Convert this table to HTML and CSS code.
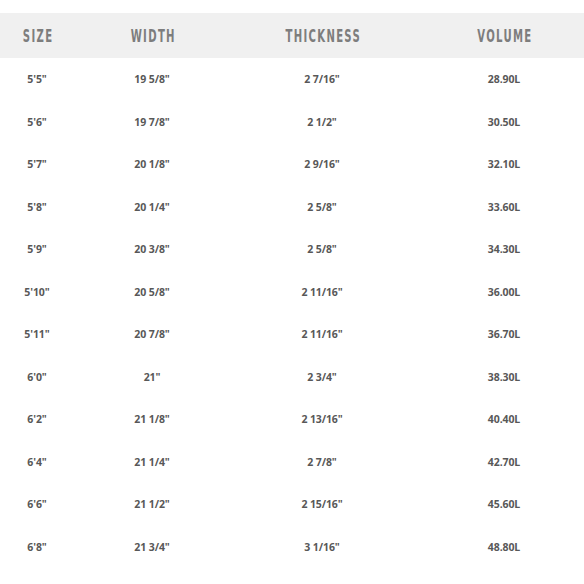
FILE: index.html
```html
<!DOCTYPE html>
<html>
<head>
<meta charset="utf-8">
<link rel="stylesheet" href="styles.css">
</head>
<body>
<div class="table">
  <div class="row head">
    <div class="c"><span class="h">SIZE</span></div><div class="c"><span class="h">WIDTH</span></div><div class="c"><span class="h">THICKNESS</span></div><div class="c last"><span class="h">VOLUME</span></div>
  </div>
  <div class="row"><div class="c">5'5"</div><div class="c">19 5/8"</div><div class="c">2 7/16"</div><div class="c last">28.90L</div></div>
  <div class="row"><div class="c">5'6"</div><div class="c">19 7/8"</div><div class="c">2 1/2"</div><div class="c last">30.50L</div></div>
  <div class="row"><div class="c">5'7"</div><div class="c">20 1/8"</div><div class="c">2 9/16"</div><div class="c last">32.10L</div></div>
  <div class="row"><div class="c">5'8"</div><div class="c">20 1/4"</div><div class="c">2 5/8"</div><div class="c last">33.60L</div></div>
  <div class="row"><div class="c">5'9"</div><div class="c">20 3/8"</div><div class="c">2 5/8"</div><div class="c last">34.30L</div></div>
  <div class="row"><div class="c">5'10"</div><div class="c">20 5/8"</div><div class="c">2 11/16"</div><div class="c last">36.00L</div></div>
  <div class="row"><div class="c">5'11"</div><div class="c">20 7/8"</div><div class="c">2 11/16"</div><div class="c last">36.70L</div></div>
  <div class="row"><div class="c">6'0"</div><div class="c">21"</div><div class="c">2 3/4"</div><div class="c last">38.30L</div></div>
  <div class="row"><div class="c">6'2"</div><div class="c">21 1/8"</div><div class="c">2 13/16"</div><div class="c last">40.40L</div></div>
  <div class="row"><div class="c">6'4"</div><div class="c">21 1/4"</div><div class="c">2 7/8"</div><div class="c last">42.70L</div></div>
  <div class="row"><div class="c">6'6"</div><div class="c">21 1/2"</div><div class="c">2 15/16"</div><div class="c last">45.60L</div></div>
  <div class="row"><div class="c">6'8"</div><div class="c">21 3/4"</div><div class="c">3 1/16"</div><div class="c last">48.80L</div></div>
</div>
</body>
</html>
```
FILE: styles.css
```css
html, body {
  margin: 0;
  padding: 0;
  background: #ffffff;
}
.table {
  padding-top: 13px;
  width: 584px;
  overflow: hidden;
}
.row {
  display: grid;
  grid-template-columns: 74px 156px 184px 170px;
  height: 42.5px;
  align-items: center;
  font-family: "Open Sans", "DejaVu Sans", sans-serif;
  font-weight: 700;
  font-size: 10.5px;
  color: #585858;
  letter-spacing: -0.1px;
}
.c {
  text-align: center;
  white-space: nowrap;
}
.c.last {
  padding-left: 10px;
}
.row.head {
  height: 45px;
  background: #f0f0f0;
  font-family: "DejaVu Sans Condensed", "DejaVu Sans", sans-serif;
  font-weight: 700;
  font-size: 17px;
  letter-spacing: 2px;
  color: #7d7d7d;
}
.h {
  display: inline-block;
  transform: scaleX(0.66);
  margin-right: -2px;
}
```
